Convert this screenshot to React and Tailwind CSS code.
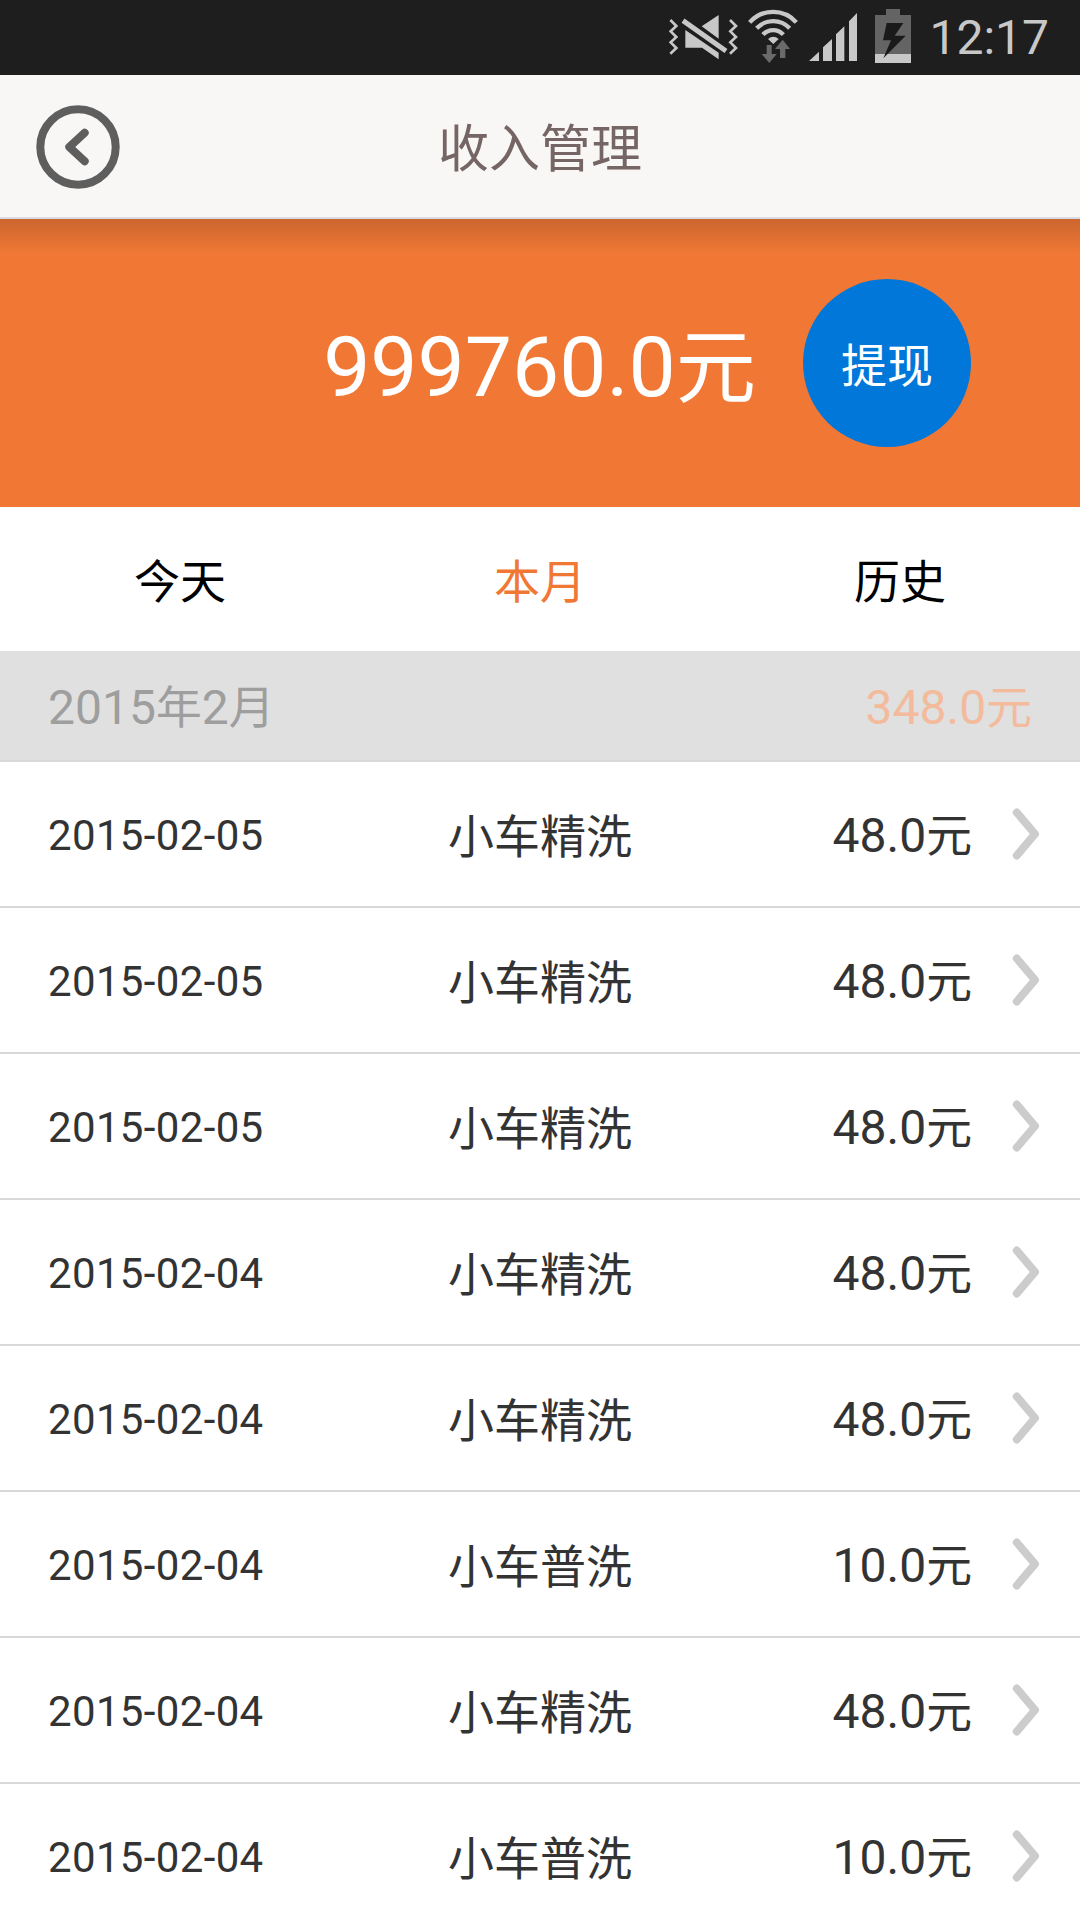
import { useState } from 'react'

const TABS = ['今天', '本月', '历史']

const RECORDS = [
  { id: 1, date: '2015-02-05', service: '小车精洗', amount: '48.0' },
  { id: 2, date: '2015-02-05', service: '小车精洗', amount: '48.0' },
  { id: 3, date: '2015-02-05', service: '小车精洗', amount: '48.0' },
  { id: 4, date: '2015-02-04', service: '小车精洗', amount: '48.0' },
  { id: 5, date: '2015-02-04', service: '小车精洗', amount: '48.0' },
  { id: 6, date: '2015-02-04', service: '小车普洗', amount: '10.0' },
  { id: 7, date: '2015-02-04', service: '小车精洗', amount: '48.0' },
  { id: 8, date: '2015-02-04', service: '小车普洗', amount: '10.0' },
]

export default function App() {
  const [activeTab, setActiveTab] = useState('本月')

  return (
    <div className="w-[1080px] h-[1920px] overflow-hidden bg-white flex flex-col font-['Roboto','Noto_Sans_CJK_SC',sans-serif] text-[#333333]">
      <StatusBar />

      {/* Title bar */}
      <header className="h-36 shrink-0 bg-[#f8f7f5] border-b-2 border-[#d9dce4] grid grid-cols-[1fr_auto_1fr] items-center px-9 pt-0.5">
        <button aria-label="返回" className="justify-self-start">
          <BackIcon />
        </button>
        <h1 className="text-[51px] leading-none text-[#756565] pt-[5px]">收入管理</h1>
      </header>

      {/* Balance */}
      <section className="h-72 shrink-0 bg-[#f07834] bg-linear-to-b from-[#cb652e] to-[#f07834] to-[34px] flex items-center justify-end gap-[47px] pr-[109px]">
        <p className="text-[84px] leading-none text-white pt-2.5">999760.0<Cjk>元</Cjk></p>
        <button className="w-42 h-42 rounded-full bg-[#0077d9] text-white text-[46px] leading-none pt-[5px]">提现</button>
      </section>

      {/* Tab switcher */}
      <nav className="h-36 shrink-0 grid grid-cols-3">
        {TABS.map(tab => (
          <button
            key={tab}
            onClick={() => setActiveTab(tab)}
            className={`text-[46px] leading-none pt-[5px] ${activeTab === tab ? 'text-[#f07834]' : 'text-black'}`}
          >
            {tab}
          </button>
        ))}
      </nav>

      <div className="h-[111px] shrink-0 bg-[#e0e0e0] border-b-2 border-[#d9d9d9] flex items-center justify-between px-12 pt-1 text-[48px] leading-none">
        <span className="text-[#9e9e9e]">2015<Cjk>年</Cjk>2<Cjk>月</Cjk></span>
        <span className="text-[#f3bb9c]">348.0<Cjk>元</Cjk></span>
      </div>

      <ul>
        {RECORDS.map(record => <RecordRow key={record.id} record={record} />)}
      </ul>
    </div>
  )
}

function RecordRow({ record }) {
  return (
    <li className="h-[146px] border-b-2 border-[#d9d9d9] grid grid-cols-[1fr_auto_1fr] items-center px-10 leading-none">
      <span className="text-[42px] tracking-[0.35px] pl-2 pt-1">{record.date}</span>
      <span className="text-[46px] pt-1.5">{record.service}</span>
      <span className="flex items-center justify-end gap-10 text-[48px]">
        <span className="pt-1">{record.amount}<Cjk>元</Cjk></span>
        <ChevronIcon />
      </span>
    </li>
  )
}

// Han characters run slightly smaller than the digits next to them
function Cjk({ children }) {
  return <span className="text-[0.955em] leading-none">{children}</span>
}

function StatusBar() {
  return (
    <div className="h-[75px] shrink-0 bg-[#1e1e1e] flex items-start justify-end pr-[31px] text-[#c8c8c8]">
      <svg className="w-[70px] h-[46px] mt-3.5" viewBox="28 42 210 138" fill="currentColor">
        <g fill="none" stroke="currentColor" strokeWidth="8">
          <path d="M32 60 50 78 33 94 50 111 33 127 50 144 32 161" />
          <path d="M211 60 229 78 212 94 229 111 212 127 229 144 211 161" />
        </g>
        <path d="M70 62 199 153" stroke="currentColor" strokeWidth="15" />
        <path d="M177 45V116L126 79ZM77 90 177 158V178L127 143H77Z" />
      </svg>
      <svg className="w-[50px] h-[54px] mt-[9px] ml-[9px]" viewBox="264 27 150 162" fill="none">
        <g stroke="currentColor" strokeWidth="13">
          <path d="M269 67A94 94 0 0 1 409 67" />
          <path d="M290 85A68 68 0 0 1 389 85" />
          <path d="M309 104A41 41 0 0 1 370 104" />
        </g>
        <path d="M324 117Q340 104 356 117L340 132Z" fill="currentColor" />
        <path d="M320 135H335V162H350L328 189 305 162H320ZM360 174V147H345L368 119 390 147H376V174Z" fill="#6a6a6a" />
      </svg>
      <svg className="w-12 h-12 mt-[13px] ml-[11px]" viewBox="447 39 144 144" fill="currentColor">
        <path d="M447 183 477 155V183ZM489 183V142L516 117V183ZM528 183V103L553 79V183ZM567 183V64L591 39V183Z" />
      </svg>
      <svg className="w-9 h-[54px] mt-[9px] ml-[18px]" viewBox="45 27 108 162">
        <path d="M78 27H120V45H153V189H45V45H78Z" fill="#646464" />
        <path d="M45 162H153V189H45Z" fill="currentColor" />
        <path d="M80 69H130L104 107H137L70 175 93 121H69Z" fill="#1a1a1a" />
      </svg>
      <span className="ml-[18px] mt-3.5 text-[48px] leading-none">12:17</span>
    </div>
  )
}

function BackIcon() {
  return (
    <svg className="w-[84px] h-[84px]" viewBox="0 0 84 84" fill="none" stroke="#5e5e5e">
      <circle cx="42" cy="42" r="37.7" strokeWidth="8" />
      <path d="M48.7 27.7 33.3 42 48.7 56.3" strokeWidth="8" strokeLinecap="round" strokeLinejoin="round" />
    </svg>
  )
}

function ChevronIcon() {
  return (
    <svg className="w-7 h-[52px]" viewBox="0 0 28 52" fill="none" stroke="#cccccc">
      <path d="M4.8 4.5 23 26 4.8 47.5" strokeWidth="8" strokeLinecap="round" strokeLinejoin="round" />
    </svg>
  )
}
